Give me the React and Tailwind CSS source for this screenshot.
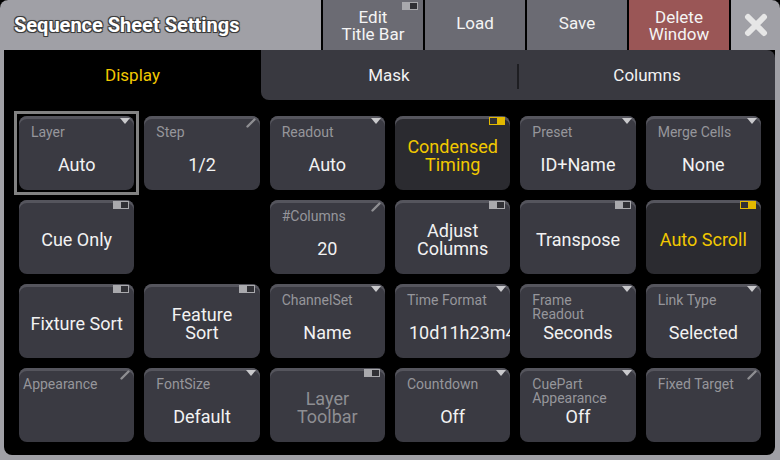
import React from 'react';

const font = "font-['Roboto','Liberation_Sans',sans-serif]";

const Toggle = ({ on, className = 'top-[1px] right-[5px]' }) => (
    <span className={`absolute flex h-[8px] w-[16px] p-[1px] ${className} ${on ? 'bg-[#e2b800] justify-start' : 'bg-[#a9a9ad] justify-end'}`}>
        <span className="h-full w-[7px] bg-[#303035]" />
    </span>
);

const Triangle = () => (
    <svg className="absolute top-[2px] right-[4px]" width="10" height="6" viewBox="0 0 10 6">
        <path d="M0 0 L10 0 L5 6 Z" fill="#c9c9cc" />
    </svg>
);

const Pencil = () => (
    <svg className="absolute top-[1px] right-[3px]" width="11" height="11" viewBox="0 0 11 11">
        <path d="M1.5 9.5 L8.5 2.5" stroke="#8e8e92" strokeWidth="2.4" strokeLinecap="round" />
    </svg>
);

const Mark = ({ mark, active }) => {
    if (mark === 'tri') return <Triangle />;
    if (mark === 'pen') return <Pencil />;
    if (mark === 'tog') return <Toggle on={active} />;
    return null;
};

const cells = [
    { label: 'Layer', value: 'Auto', mark: 'tri', selected: true },
    { label: 'Step', value: '1/2', mark: 'pen' },
    { label: 'Readout', value: 'Auto', mark: 'tri' },
    { text: ['Condensed', 'Timing'], mark: 'tog', active: true },
    { label: 'Preset', value: 'ID+Name', mark: 'tri' },
    { label: 'Merge Cells', value: 'None', mark: 'tri' },

    { text: ['Cue Only'], mark: 'tog' },
    null,
    { label: '#Columns', value: '20', mark: 'pen' },
    { text: ['Adjust', 'Columns'], mark: 'tog' },
    { text: ['Transpose'], mark: 'tog' },
    { text: ['Auto Scroll'], mark: 'tog', active: true },

    { text: ['Fixture Sort'], mark: 'tog' },
    { text: ['Feature', 'Sort'], mark: 'tog' },
    { label: 'ChannelSet', value: 'Name', mark: 'tri' },
    { label: 'Time Format', value: '10d11h23m45s', mark: 'tri' },
    { label: ['Frame', 'Readout'], value: 'Seconds', mark: 'tri' },
    { label: 'Link Type', value: 'Selected', mark: 'tri' },

    { label: 'Appearance', value: '', mark: 'pen', tight: true },
    { label: 'FontSize', value: 'Default', mark: 'tri' },
    { text: ['Layer', 'Toolbar'], mark: 'tog', dim: true },
    { label: 'Countdown', value: 'Off', mark: 'tri' },
    { label: ['CuePart', 'Appearance'], value: 'Off', mark: 'tri' },
    { label: 'Fixed Target', value: '', mark: 'pen' },
];

const Cell = ({ c }) => {
    const base = `relative h-[74px] rounded-[8px] shadow-[inset_0_3px_0_#55555d] ${c.active ? 'bg-[#2b2b30]' : 'bg-[#3a3a42]'}`;
    const labels = c.label ? (Array.isArray(c.label) ? c.label : [c.label]) : null;

    const body = labels ? (
        <div className={`${base} flex flex-col pt-[9px]`}>
            <div className={`h-[29px] text-[14px] leading-[14px] text-[#96969b] ${c.tight ? 'pl-[4px]' : 'pl-[12px]'}`}>
                {labels.map((l) => <div key={l}>{l}</div>)}
            </div>
            <div className="overflow-hidden whitespace-nowrap px-[14px] text-center text-[18px] leading-[22px] text-[#f2f2f2]">
                {c.value}
            </div>
            <Mark mark={c.mark} active={c.active} />
        </div>
    ) : (
        <div className={`${base} flex flex-col items-center justify-center pt-[5px] text-center text-[18px] leading-[18px] ${c.active ? 'text-[#f2c800]' : c.dim ? 'text-[#8e8e92]' : 'text-[#f2f2f2]'}`}>
            {c.text.map((t) => <div key={t}>{t}</div>)}
            <Mark mark={c.mark} active={c.active} />
        </div>
    );

    if (c.selected) {
        return (
            <div className="relative">
                <span className="absolute -inset-[5px] border-[3px] border-[#828282]" />
                {body}
            </div>
        );
    }
    return body;
};

const TitleButton = ({ lines, className = 'bg-[#6b6b73]', toggle }) => (
    <div className={`relative flex w-[100px] flex-col items-center justify-center text-[17px] leading-[17px] text-[#f4f4f4] ${lines.length > 1 ? 'pt-[2px]' : 'pb-[3px]'} ${className}`}>
        {lines.map((l) => <div key={l}>{l}</div>)}
        {toggle && <Toggle className="top-[2px] right-[5px]" />}
    </div>
);

export default function App() {
    return (
        <div className="h-[460px] w-[780px] bg-black">
            <div className={`flex h-[460px] w-[780px] flex-col overflow-hidden rounded-t-[8px] bg-[#a0a0a6] ${font}`}>
                {/* title bar */}
                <div className="flex h-[50px] gap-[2px] bg-black">
                    <div className="flex w-[321px] items-center rounded-tl-[8px] bg-[#a0a0a6] pl-[14px] text-[20px] font-bold text-white [text-shadow:-1px_-1px_0_#3c3c3c,1px_-1px_0_#3c3c3c,-1px_1px_0_#3c3c3c,1px_1px_0_#3c3c3c,0_0_2px_#3c3c3c]">
                        Sequence Sheet Settings
                    </div>
                    <TitleButton lines={['Edit', 'Title Bar']} toggle />
                    <TitleButton lines={['Load']} />
                    <TitleButton lines={['Save']} />
                    <TitleButton lines={['Delete', 'Window']} className="bg-[#9a5656]" />
                    <div className="flex flex-1 items-center justify-center rounded-tr-[8px] bg-[#a0a0a6]">
                        <svg width="24" height="24" viewBox="0 0 24 24">
                            <path d="M4 4 L20 20 M20 4 L4 20" stroke="#e6e6e6" strokeWidth="6" strokeLinecap="round" />
                        </svg>
                    </div>
                </div>

                {/* body */}
                <div className="flex flex-1 flex-col pb-[5px] pl-[4px] pr-[5px]">
                    <div className="flex flex-1 flex-col rounded-b-[8px] bg-black">
                        <div className="flex h-[50px] pt-[2px] text-[17px]">
                            <div className="flex w-[257px] items-center justify-center text-[#f2c800]">Display</div>
                            <div className="-mt-[2px] flex flex-1 items-center rounded-bl-[8px] rounded-tr-[8px] bg-[#393940] pt-[2px] text-[#f2f2f2]">
                                <div className="flex w-[256px] justify-center">Mask</div>
                                <div className="h-[25px] w-[2px] bg-[#1e1e22]" />
                                <div className="flex flex-1 justify-center">Columns</div>
                            </div>
                        </div>
                        <div className="pl-[15px] pt-[16px]">
                            <div className="grid w-[742px] grid-cols-6 gap-[10px]">
                                {cells.map((c, i) => (c ? <Cell key={i} c={c} /> : <div key={i} />))}
                            </div>
                        </div>
                    </div>
                </div>
            </div>
        </div>
    );
}
